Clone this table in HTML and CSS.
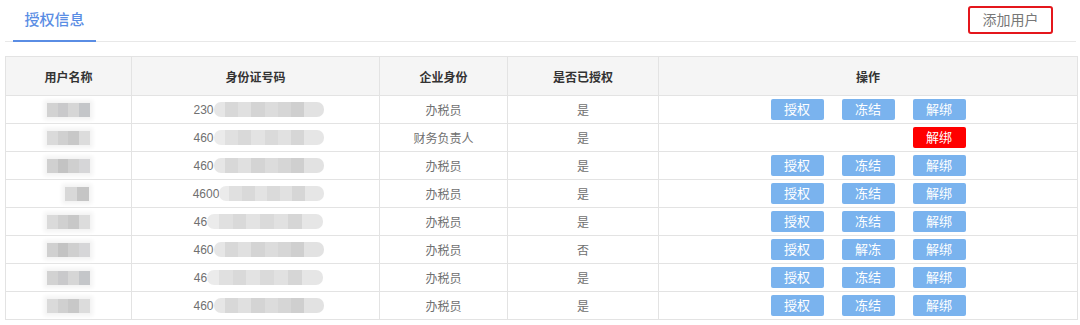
FILE: index.html
```html
<!DOCTYPE html>
<html lang="zh">
<head>
<meta charset="utf-8">
<link rel="stylesheet" href="styles.css">
</head>
<body>
<div class="page">
  <div class="topbar">
    <div class="tab">授权信息</div>
    <button class="add-btn">添加用户</button>
  </div>
  <table class="grid">
    <colgroup>
      <col class="c1"><col class="c2"><col class="c3"><col class="c4"><col class="c5">
    </colgroup>
    <thead>
      <tr><th>用户名称</th><th>身份证号码</th><th>企业身份</th><th>是否已授权</th><th>操作</th></tr>
    </thead>
    <tbody>
      <tr>
        <td><span class="blur-name n1"></span></td>
        <td><span class="idc"><span>230</span><span class="blur-id b1"></span></span></td>
        <td>办税员</td><td>是</td>
        <td><div class="ops"><span class="btn">授权</span><span class="btn">冻结</span><span class="btn">解绑</span></div></td>
      </tr>
      <tr>
        <td><span class="blur-name n2"></span></td>
        <td><span class="idc"><span>460</span><span class="blur-id b2"></span></span></td>
        <td>财务负责人</td><td>是</td>
        <td><div class="ops"><span class="btn ghost">授权</span><span class="btn ghost">冻结</span><span class="btn red">解绑</span></div></td>
      </tr>
      <tr>
        <td><span class="blur-name n3"></span></td>
        <td><span class="idc"><span>460</span><span class="blur-id b1"></span></span></td>
        <td>办税员</td><td>是</td>
        <td><div class="ops"><span class="btn">授权</span><span class="btn">冻结</span><span class="btn">解绑</span></div></td>
      </tr>
      <tr>
        <td><span class="blur-name n4"></span></td>
        <td><span class="idc"><span>4600</span><span class="blur-id b2 short"></span></span></td>
        <td>办税员</td><td>是</td>
        <td><div class="ops"><span class="btn">授权</span><span class="btn">冻结</span><span class="btn">解绑</span></div></td>
      </tr>
      <tr>
        <td><span class="blur-name n2"></span></td>
        <td><span class="idc"><span>46</span><span class="blur-id b2 long"></span></span></td>
        <td>办税员</td><td>是</td>
        <td><div class="ops"><span class="btn">授权</span><span class="btn">冻结</span><span class="btn">解绑</span></div></td>
      </tr>
      <tr>
        <td><span class="blur-name n3"></span></td>
        <td><span class="idc"><span>460</span><span class="blur-id b1"></span></span></td>
        <td>办税员</td><td>否</td>
        <td><div class="ops"><span class="btn">授权</span><span class="btn">解冻</span><span class="btn">解绑</span></div></td>
      </tr>
      <tr>
        <td><span class="blur-name n1"></span></td>
        <td><span class="idc"><span>46</span><span class="blur-id b2 long"></span></span></td>
        <td>办税员</td><td>是</td>
        <td><div class="ops"><span class="btn">授权</span><span class="btn">冻结</span><span class="btn">解绑</span></div></td>
      </tr>
      <tr>
        <td><span class="blur-name n2"></span></td>
        <td><span class="idc"><span>460</span><span class="blur-id b1"></span></span></td>
        <td>办税员</td><td>是</td>
        <td><div class="ops"><span class="btn">授权</span><span class="btn">冻结</span><span class="btn">解绑</span></div></td>
      </tr>
    </tbody>
  </table>
</div>
</body>
</html>
```

FILE: styles.css
```css
* { box-sizing: border-box; }
html, body { margin: 0; padding: 0; background: #fff; }
body {
  font-family: "Liberation Sans", "Noto Sans CJK SC", sans-serif;
  color: #555;
}
.page { padding: 0 4px 0 5px; width: 1080px; }

.topbar {
  height: 42px;
  border-bottom: 1px solid #e8e8e8;
  display: flex;
  justify-content: space-between;
  align-items: flex-start;
}
.tab {
  margin-left: 8px;
  width: 83px;
  height: 42px;
  padding-top: 8px;
  text-align: center;
  font-size: 15px;
  font-weight: 500;
  color: #5a8de4;
  border-bottom: 2px solid #5a8de4;
  margin-bottom: -1px;
}
.add-btn {
  margin: 6px 23px 0 0;
  width: 85px;
  height: 28px;
  border: 2px solid #e4161c;
  border-radius: 3px;
  background: #fff;
  color: #777;
  font-family: "Liberation Sans", "Noto Sans CJK SC", sans-serif;
  font-size: 14px;
  padding: 0;
  line-height: 22px;
}

.grid {
  margin-top: 14px;
  width: 1072px;
  border-collapse: collapse;
  table-layout: fixed;
  font-size: 12px;
}
.c1 { width: 126px; }
.c2 { width: 248px; }
.c3 { width: 128px; }
.c4 { width: 151px; }
.c5 { width: 419px; }
.grid th, .grid td {
  border: 1px solid #e3e3e3;
  text-align: center;
  padding: 0;
}
.grid th {
  height: 39px;
  background: #f5f5f5;
  color: #333;
  font-weight: bold;
  font-size: 12px;
}
.grid td {
  height: 28px;
  color: #707070;
}

.ops {
  display: flex;
  justify-content: center;
  gap: 18px;
}
.btn {
  width: 53px;
  height: 21px;
  line-height: 21px;
  background: #7ab3ee;
  color: #fff;
  border-radius: 2px;
  font-size: 13px;
}
.btn.ghost { visibility: hidden; }
.btn.red { background: #ff0000; }

.blur-name {
  display: inline-block;
  width: 43px;
  height: 14px;
  vertical-align: middle;
  margin-left: 0;
  filter: blur(0.6px);
  background: linear-gradient(90deg, #d2d2d2 0 25%, #c9c9cb 25% 50%, #d6d6d6 50% 75%, #c4c6c9 75% 100%);
  box-shadow: 0 0 4px 3px #f3f3f3;
}
.blur-name.n2 { background: linear-gradient(90deg, #dadada 0 25%, #d0d0d0 25% 50%, #c8c8c8 50% 75%, #dcdcdc 75% 100%); }
.blur-name.n3 { background: linear-gradient(90deg, #d0d0d0 0 25%, #c3c3c3 25% 50%, #cfcfcf 50% 75%, #d6d6d8 75% 100%); }
.blur-name.n4 { width: 24px; margin-left: 16px; background: linear-gradient(90deg, #d8d8d8 0 50%, #c5c5c5 50% 100%); }

.idc {
  display: inline-flex;
  align-items: center;
  margin-left: 6px;
}
.blur-id {
  display: inline-block;
  width: 110px;
  height: 15px;
  border-radius: 7px;
  filter: blur(0.6px);
  background: linear-gradient(90deg, #e6e6e6 0 10%, #d8d8d8 10% 22%, #e0e0e0 22% 34%, #d4d4d4 34% 46%, #dcdcdc 46% 58%, #d6d6d6 58% 70%, #cfcfcf 70% 82%, #e2e2e2 82% 100%);
}
.blur-id.b2 { background: linear-gradient(90deg, #ebebeb 0 10%, #e0e0e0 10% 22%, #d9d9d9 22% 34%, #e3e3e3 34% 46%, #dadada 46% 58%, #e1e1e1 58% 70%, #d6d6d6 70% 82%, #e6e6e6 82% 100%); }
.blur-id.short { width: 105px; }
.blur-id.long { width: 116px; }
```
